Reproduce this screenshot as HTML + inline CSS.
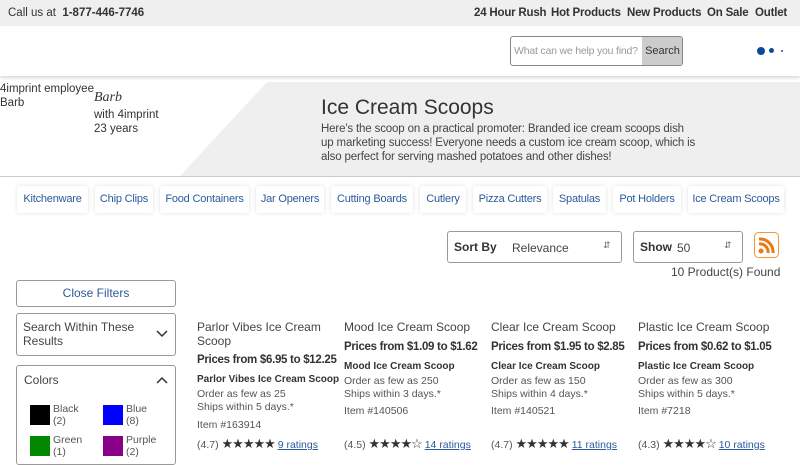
<!DOCTYPE html>
<html><head><style>
*{margin:0;padding:0;box-sizing:border-box}
body{width:800px;height:450px;overflow:hidden;background:#fff;font-family:"Liberation Sans",sans-serif;color:#333;position:relative;font-size:12px}
.a{position:absolute;white-space:nowrap}
.top{position:absolute;left:0;top:0;width:800px;height:26px;background:#efefef}
.hdr{position:absolute;left:0;top:26px;width:800px;height:50px;background:#fff;box-shadow:0 2px 3px rgba(0,0,0,.15)}
.pill{position:absolute;top:186px;height:27px;background:#fff;box-shadow:0 0 4px rgba(0,0,0,.12);border-radius:3px;color:#2a5a9c;font-size:11px;line-height:27px;text-align:center;white-space:nowrap;letter-spacing:-0.2px}
.box{position:absolute;border:1px solid #999;border-radius:3px;background:#fff}
.card div{position:absolute;white-space:nowrap}
.t{font-size:12px;color:#444}
.p{font-size:11.5px;font-weight:bold;color:#333;letter-spacing:-0.3px}
.s{font-size:10px;font-weight:bold;color:#333}
.g{font-size:10.5px;color:#555;line-height:13px}
.st{font-size:13px;letter-spacing:-1px;color:#333}
.lk{color:#2a5a9c;text-decoration:underline;font-size:10.5px}
.nav{position:absolute;top:7px;font-size:11.5px;font-weight:bold;white-space:nowrap;letter-spacing:-0.2px}
</style></head><body>
<div class="top"></div>
<div class="a" style="left:8px;top:7px;font-size:11.5px">Call us at &nbsp;<b>1-877-446-7746</b></div>
<div class="nav" style="left:474px">24 Hour Rush</div>
<div class="nav" style="left:551px">Hot Products</div>
<div class="nav" style="left:627px">New Products</div>
<div class="nav" style="left:707px">On Sale</div>
<div class="nav" style="left:755px">Outlet</div>
<div class="hdr"></div>
<div class="a" style="left:510px;top:36px;width:173px;height:30px;border:1px solid #888;border-radius:3px;background:#fff;overflow:hidden">
<div class="a" style="left:3px;top:8px;color:#999;font-size:10.5px;letter-spacing:-0.2px">What can we help you find?</div>
<div class="a" style="left:131px;top:0;width:41px;height:28px;background:#ccc;font-size:11px;line-height:28px;text-align:center">Search</div></div>
<div class="a" style="left:757px;top:47px;width:8px;height:8px;border-radius:50%;background:#0b4a9a"></div>
<div class="a" style="left:769px;top:48px;width:5px;height:5px;border-radius:50%;background:#0b4a9a"></div>
<div class="a" style="left:781px;top:50px;width:2px;height:2px;border-radius:50%;background:#0b4a9a"></div>
<svg class="a" style="left:0;top:82px" width="800" height="95"><polygon points="267,0 800,0 800,94 180,94" fill="#efefef"/><line x1="0" y1="94.5" x2="800" y2="94.5" stroke="#ccc"/></svg>
<div class="a" style="left:0;top:82px;font-size:11.5px;line-height:14px">4imprint employee<br>Barb</div>
<div class="a" style="left:94px;top:90px;font-size:14px;font-style:italic;font-family:'Liberation Serif',serif">Barb</div>
<div class="a" style="left:94px;top:108px;font-size:11.5px;line-height:14px">with 4imprint<br>23 years</div>
<div class="a" style="left:321px;top:96px;font-size:21px;color:#333">Ice Cream Scoops</div>
<div class="a" style="left:321px;top:122px;font-size:11.5px;line-height:14px;color:#444;letter-spacing:-0.15px">Here's the scoop on a practical promoter: Branded ice cream scoops dish<br>up marketing success! Everyone needs a custom ice cream scoop, which is<br>also perfect for serving mashed potatoes and other dishes!</div>
<div class="pill" style="left:17px;width:71px">Kitchenware</div>
<div class="pill" style="left:95px;width:58px">Chip Clips</div>
<div class="pill" style="left:160px;width:89px">Food Containers</div>
<div class="pill" style="left:256px;width:68px">Jar Openers</div>
<div class="pill" style="left:331px;width:82px">Cutting Boards</div>
<div class="pill" style="left:420px;width:46px">Cutlery</div>
<div class="pill" style="left:473px;width:74px">Pizza Cutters</div>
<div class="pill" style="left:553px;width:53px">Spatulas</div>
<div class="pill" style="left:613px;width:68px">Pot Holders</div>
<div class="pill" style="left:688px;width:96px">Ice Cream Scoops</div>
<div class="box" style="left:447px;top:231px;width:175px;height:32px"></div>
<div class="a" style="left:454px;top:240px;font-weight:bold">Sort By</div>
<div class="a" style="left:512px;top:241px;color:#444">Relevance</div>
<div class="a" style="left:603px;top:240px;font-size:9px;color:#666">&#8693;</div>
<div class="box" style="left:633px;top:231px;width:110px;height:32px"></div>
<div class="a" style="left:640px;top:240px;font-weight:bold">Show</div>
<div class="a" style="left:677px;top:241px;color:#444">50</div>
<div class="a" style="left:724px;top:240px;font-size:9px;color:#666">&#8693;</div>
<svg class="a" style="left:754px;top:232px" width="25" height="26"><rect x="0.5" y="0.5" width="24" height="25" rx="4" fill="#fff" stroke="#f29a3a"/><circle cx="7" cy="19" r="2.5" fill="#e87a10"/><path d="M5 12a8 8 0 0 1 9 9M5 7a13 13 0 0 1 14 14" stroke="#e87a10" stroke-width="3" fill="none"/></svg>
<div class="a" style="left:671px;top:265px;color:#444">10 Product(s) Found</div>
<div class="box" style="left:16px;top:280px;width:160px;height:27px;color:#2a5a9c;text-align:center;line-height:25px">Close Filters</div>
<div class="box" style="left:16px;top:313px;width:160px;height:43px"></div>
<div class="a" style="left:23px;top:320px;line-height:14px;color:#444">Search Within These<br>Results</div>
<svg class="a" style="left:156px;top:330px" width="12" height="8"><path d="M1 1l5 5 5-5" stroke="#333" stroke-width="1.5" fill="none"/></svg>
<div class="box" style="left:16px;top:365px;width:160px;height:100px"></div>
<div class="a" style="left:24px;top:373px;color:#444">Colors</div>
<svg class="a" style="left:156px;top:376px" width="12" height="8"><path d="M1 7l5-5 5 5" stroke="#333" stroke-width="1.5" fill="none"/></svg>
<div class="a" style="left:30px;top:405px;width:20px;height:20px;background:#000"></div>
<div class="a" style="left:53px;top:403px;font-size:10.5px;line-height:12px;color:#555">Black<br>(2)</div>
<div class="a" style="left:103px;top:405px;width:20px;height:20px;background:#00f"></div>
<div class="a" style="left:126px;top:403px;font-size:10.5px;line-height:12px;color:#555">Blue<br>(8)</div>
<div class="a" style="left:30px;top:436px;width:20px;height:20px;background:#080"></div>
<div class="a" style="left:53px;top:434px;font-size:10.5px;line-height:12px;color:#555">Green<br>(1)</div>
<div class="a" style="left:103px;top:436px;width:20px;height:20px;background:#808"></div>
<div class="a" style="left:126px;top:434px;font-size:10.5px;line-height:12px;color:#555">Purple<br>(2)</div>

<div class="card">
<div class="t" style="left:197px;top:320px;line-height:14px">Parlor Vibes Ice Cream<br>Scoop</div>
<div class="p" style="left:197px;top:354px">Prices from $6.95 to $12.25</div>
<div class="s" style="left:197px;top:374px">Parlor Vibes Ice Cream Scoop</div>
<div class="g" style="left:197px;top:388px">Order as few as 25<br>Ships within 5 days.*</div>
<div class="g" style="left:197px;top:419px">Item #163914</div>
<div class="g" style="left:197px;top:437px">(4.7) <span class="st">★★★★★</span> <span class="lk">9 ratings</span></div>

<div class="t" style="left:344px;top:320px">Mood Ice Cream Scoop</div>
<div class="p" style="left:344px;top:341px">Prices from $1.09 to $1.62</div>
<div class="s" style="left:344px;top:361px">Mood Ice Cream Scoop</div>
<div class="g" style="left:344px;top:375px">Order as few as 250<br>Ships within 3 days.*</div>
<div class="g" style="left:344px;top:405px">Item #140506</div>
<div class="g" style="left:344px;top:437px">(4.5) <span class="st">★★★★☆</span> <span class="lk">14 ratings</span></div>

<div class="t" style="left:491px;top:320px">Clear Ice Cream Scoop</div>
<div class="p" style="left:491px;top:341px">Prices from $1.95 to $2.85</div>
<div class="s" style="left:491px;top:361px">Clear Ice Cream Scoop</div>
<div class="g" style="left:491px;top:375px">Order as few as 150<br>Ships within 4 days.*</div>
<div class="g" style="left:491px;top:405px">Item #140521</div>
<div class="g" style="left:491px;top:437px">(4.7) <span class="st">★★★★★</span> <span class="lk">11 ratings</span></div>

<div class="t" style="left:638px;top:320px">Plastic Ice Cream Scoop</div>
<div class="p" style="left:638px;top:341px">Prices from $0.62 to $1.05</div>
<div class="s" style="left:638px;top:361px">Plastic Ice Cream Scoop</div>
<div class="g" style="left:638px;top:375px">Order as few as 300<br>Ships within 5 days.*</div>
<div class="g" style="left:638px;top:405px">Item #7218</div>
<div class="g" style="left:638px;top:437px">(4.3) <span class="st">★★★★☆</span> <span class="lk">10 ratings</span></div>
</div>
</body></html>
